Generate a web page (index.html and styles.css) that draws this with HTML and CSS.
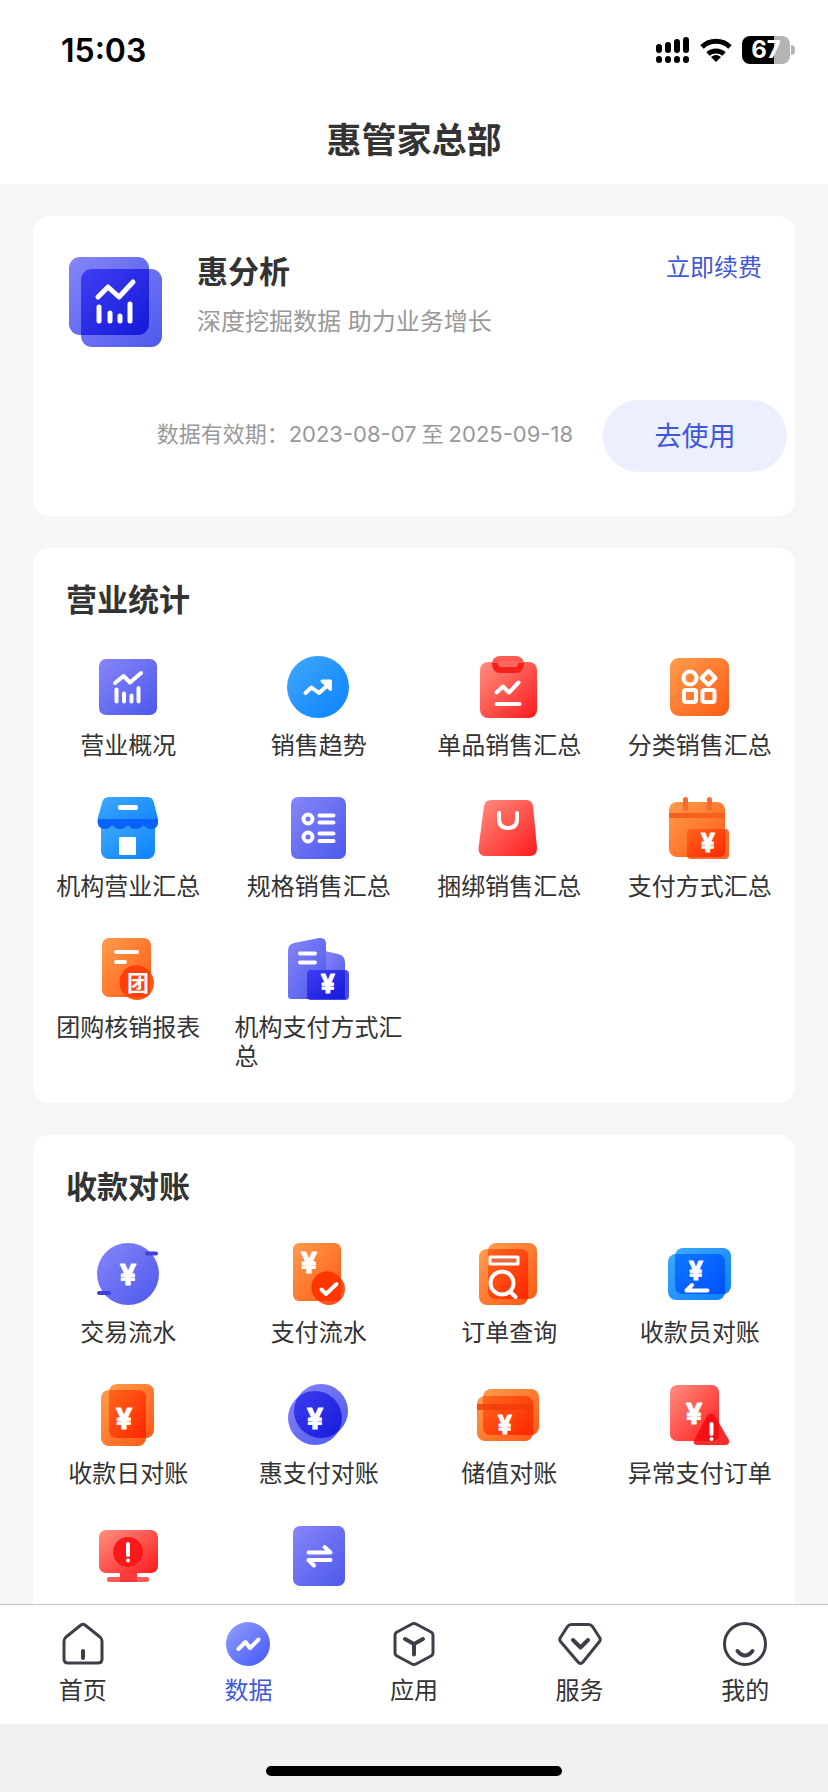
FILE: index.html
```html
<!DOCTYPE html>
<html lang="zh-CN">
<head>
  <meta charset="UTF-8">
  <meta name="viewport" content="width=device-width, initial-scale=1.0">
  <title>惠管家总部</title>
  <link rel="stylesheet" href="styles.css">
</head>
<body>
  <!-- shared gradients -->
  <svg class="defs" width="0" height="0" aria-hidden="true">
    <defs>
      <linearGradient id="purple" x1="0" y1="0" x2="1" y2="1"><stop offset="0" stop-color="#8785f8"/><stop offset="1" stop-color="#4c59ec"/></linearGradient>
      <linearGradient id="navy" x1="0" y1="0" x2="1" y2="1"><stop offset="0" stop-color="#3f3ff2"/><stop offset="1" stop-color="#1418d8"/></linearGradient>
      <linearGradient id="blue" x1="0" y1="0" x2="1" y2="1"><stop offset="0" stop-color="#3fa8f8"/><stop offset="1" stop-color="#0b82ff"/></linearGradient>
      <linearGradient id="deepblue" x1="0" y1="0" x2="1" y2="1"><stop offset="0" stop-color="#0f78ff"/><stop offset="1" stop-color="#0050ff"/></linearGradient>
      <linearGradient id="orange" x1="0" y1="0" x2="1" y2="1"><stop offset="0" stop-color="#ff9c4c"/><stop offset="1" stop-color="#ff5a14"/></linearGradient>
      <linearGradient id="fire" x1="0" y1="0" x2="1" y2="1"><stop offset="0" stop-color="#ff661c"/><stop offset="1" stop-color="#ff2600"/></linearGradient>
      <linearGradient id="red" x1="0" y1="0" x2="1" y2="1"><stop offset="0" stop-color="#ff8f80"/><stop offset="1" stop-color="#ff1a1c"/></linearGradient>
      <linearGradient id="tab" x1="0" y1="0" x2="1" y2="1"><stop offset="0" stop-color="#93a0fb"/><stop offset="1" stop-color="#4357fa"/></linearGradient>
      <clipPath id="coin"><circle cx="34" cy="28" r="27"/></clipPath>
    </defs>
  </svg>

  <div class="page">
    <header>
      <div class="status">
        <span class="time">15:03</span>
        <div class="status-icons">
          <svg width="34" height="28" viewBox="0 0 34 28" stroke="#000" stroke-width="6" stroke-linecap="round">
            <path d="M3 11v3M12 9v5M21 6v8M30 4v10"/>
            <path d="M3 23v1M12 23v1M21 23v1M30 23v1"/>
          </svg>
          <svg width="32" height="26" viewBox="0 0 32 26" fill="none" stroke="#000" stroke-width="5">
            <path d="M2 10a20 20 0 0 1 28 0"/>
            <path d="M8 17a12 12 0 0 1 16 0"/>
            <path d="M16 25l-5-5q5-4 10 0z" fill="#000" stroke="none"/>
          </svg>
          <div class="battery"><span>67</span></div>
        </div>
      </div>
      <h1>惠管家总部</h1>
    </header>

    <main>
      <section class="card promo">
        <div class="promo-top">
          <svg width="94" height="92" viewBox="0 0 94 92" fill="none">
            <rect x="0" y="1" width="80" height="78" rx="11" fill="url(#purple)"/>
            <rect x="12" y="13" width="81" height="78" rx="11" fill="url(#purple)"/>
            <path d="M23 13h57v55a11 11 0 0 1-11 11H12V24a11 11 0 0 1 11-11z" fill="url(#navy)"/>
            <g stroke="#fff" stroke-width="5" stroke-linecap="round" stroke-linejoin="round">
              <path d="M29 41l10-10 11 10 14-15"/>
              <path d="M30 51v14M41 57v8M51 60v5M61 48v17"/>
            </g>
          </svg>
          <div class="promo-text">
            <h2>惠分析</h2>
            <p>深度挖掘数据 助力业务增长</p>
          </div>
          <a class="renew" href="#">立即续费</a>
        </div>
        <div class="promo-bottom">
          <p>数据有效期：2023-08-07<span>至</span>2025-09-18</p>
          <button type="button">去使用</button>
        </div>
      </section>

      <section class="card">
        <h2>营业统计</h2>
        <div class="grid">
          <a class="item" href="#">
            <svg class="icon" viewBox="0 0 64 64">
              <rect x="3" y="4" width="58" height="56" rx="7" fill="url(#purple)"/>
              <path class="line" d="M19 28l8.500-7 6.500 6.500L45 18M20.500 34.500v12M28 38.500v8M35.500 40.500v6M42.500 33v13.500"/>
            </svg>
            <span>营业概况</span>
          </a>
          <a class="item" href="#">
            <svg class="icon" viewBox="0 0 64 64">
              <circle cx="31" cy="32" r="31" fill="url(#blue)"/>
              <path class="line" d="M18.500 38l6-5.500 7.500 5.500 10-9"/>
              <path d="M35 26h8.500v8.500z" fill="#fff" stroke="#fff" stroke-width="3" stroke-linejoin="round"/>
            </svg>
            <span>销售趋势</span>
          </a>
          <a class="item" href="#">
            <svg class="icon" viewBox="0 0 64 64">
              <rect x="3" y="7" width="57" height="56" rx="8" fill="url(#red)"/>
              <rect x="15" y="1" width="32" height="17" rx="8" fill="#fb5a52"/>
              <path d="M15 8q0 10 9 10h14q9 0 9-10h-6q0 4-5 4H26q-5 0-5-4z" fill="#f51f1c"/>
              <rect x="21" y="6" width="20" height="6" rx="3" fill="#ff665e"/>
              <path class="line" d="M19.500 37.500l6.500-6 6 6 9.500-10M19.500 49h23"/>
            </svg>
            <span>单品销售汇总</span>
          </a>
          <a class="item" href="#">
            <svg class="icon" viewBox="0 0 64 64">
              <rect x="2" y="3" width="59" height="58" rx="9" fill="url(#orange)"/>
              <circle class="line" cx="22" cy="23" r="6.500"/>
              <path class="line" d="M40.500 16l7 7-7 7-7-7z"/>
              <rect class="line" x="16" y="35" width="12" height="12" rx="2"/>
              <rect class="line" x="34.500" y="35" width="12" height="12" rx="2"/>
            </svg>
            <span>分类销售汇总</span>
          </a>

          <a class="item" href="#">
            <svg class="icon" viewBox="0 0 64 64">
              <path d="M5 28h54v27a8 8 0 0 1-8 8H13a8 8 0 0 1-8-8z" fill="url(#blue)"/>
              <path d="M13 1h38q6 0 7 6l4 16v5q-2 5-7 5-4 0-7.500-4-3.500 4-8 4t-7.500-4q-3.500 4-8 4t-8-4q-3 4-7 4-6 0-7.500-6v-4L6 7q1-6 7-6z" fill="url(#blue)"/>
              <path d="M2 23h60v5q-2 5-7 5-4 0-7.500-4-3.500 4-8 4t-7.500-4q-3.500 4-8 4t-8-4q-3 4-7 4-6 0-7-6z" fill="#0962fb"/>
              <rect x="22" y="9" width="20" height="5" rx="2" fill="#fff"/>
              <rect x="23" y="41" width="17" height="18" rx="1" fill="#fff"/>
            </svg>
            <span>机构营业汇总</span>
          </a>
          <a class="item" href="#">
            <svg class="icon" viewBox="0 0 64 64">
              <rect x="4" y="1" width="55" height="62" rx="7" fill="url(#purple)"/>
              <circle class="line" cx="21" cy="23" r="4.500"/>
              <circle class="line" cx="21" cy="41" r="4.500"/>
              <path class="line" d="M32.500 19.500h14M32.500 26.500h14M32.500 37.500h14M32.500 45h14"/>
            </svg>
            <span>规格销售汇总</span>
          </a>
          <a class="item" href="#">
            <svg class="icon" viewBox="0 0 64 64">
              <path d="M14 4h35q6 0 7 6l4 42q0 8-7 8H9q-8 0-7.500-8L7 10q1-6 7-6z" fill="url(#red)"/>
              <path class="line" d="M22 17v6q0 9 9 9t9-9v-6"/>
            </svg>
            <span>捆绑销售汇总</span>
          </a>
          <a class="item" href="#">
            <svg class="icon" viewBox="0 0 64 64">
              <rect x="1" y="6" width="56" height="55" rx="8" fill="url(#orange)"/>
              <rect x="1" y="17" width="56" height="5" fill="#f5601c"/>
              <path d="M17.500 3.500v9M41.500 3.500v9" stroke="#fa6a35" stroke-width="5" stroke-linecap="round"/>
              <rect x="19" y="33" width="42" height="30" rx="4" fill="#ff6a2c"/>
              <path d="M23 33h34v22q0 6-7 6H19V37q0-4 4-4z" fill="url(#fire)"/>
              <text class="yen small" x="40" y="56">¥</text>
            </svg>
            <span>支付方式汇总</span>
          </a>

          <a class="item" href="#">
            <svg class="icon" viewBox="0 0 64 64">
              <rect x="6" y="1" width="49" height="59" rx="7" fill="url(#orange)"/>
              <path class="line" d="M20 15h21M20 25h9"/>
              <circle cx="41" cy="46" r="17" fill="#ff5a1c"/>
              <path d="M54 35v18q0 7-7 7H32a17 17 0 1 1 22-25z" fill="#ff4108"/>
              <text class="tuan" x="42" y="54">团</text>
            </svg>
            <span>团购核销报表</span>
          </a>
          <a class="item" href="#">
            <svg class="icon" viewBox="0 0 64 64">
              <path d="M38 14l13 3q7 2 7 8v37H38z" fill="url(#purple)"/>
              <path d="M7 6l25-5q7-1 7 6v55H4q-3 0-3-3V14q0-7 6-8z" fill="url(#purple)"/>
              <rect x="20" y="33" width="42" height="30" rx="4" fill="#4a4cf0"/>
              <path d="M24 33h34v29H20V37q0-4 4-4z" fill="url(#navy)"/>
              <path class="line" d="M13 16.500h15M13 25.500h15"/>
              <text class="yen small" x="41" y="56">¥</text>
            </svg>
            <span>机构支付方式汇总</span>
          </a>
        </div>
      </section>

      <section class="card">
        <h2>收款对账</h2>
        <div class="grid">
          <a class="item" href="#">
            <svg class="icon" viewBox="0 0 64 64">
              <circle cx="32" cy="32" r="31" fill="url(#purple)"/>
              <path d="M51 11.500h9M3 51h10" stroke="#3f40dc" stroke-width="4" stroke-linecap="round"/>
              <text class="yen" x="32" y="43">¥</text>
            </svg>
            <span>交易流水</span>
          </a>
          <a class="item" href="#">
            <svg class="icon" viewBox="0 0 64 64">
              <rect x="6" y="1" width="48" height="58" rx="6" fill="url(#orange)"/>
              <circle cx="42" cy="47" r="16" fill="#ff5422"/>
              <path d="M54 37v16q0 6-6 6H32a16 16 0 1 1 22-22z" fill="#ff3600"/>
              <text class="yen" x="22" y="31">¥</text>
              <path class="line" d="M34.500 47.500l4.500 4.500 10.500-10"/>
            </svg>
            <span>支付流水</span>
          </a>
          <a class="item" href="#">
            <svg class="icon" viewBox="0 0 64 64">
              <rect x="11" y="1" width="49" height="56" rx="8" fill="url(#orange)"/>
              <rect x="2" y="7" width="49" height="56" rx="8" fill="url(#orange)"/>
              <path d="M11 7h32q8 0 8 8v42H19q-8 0-8-8z" fill="url(#fire)"/>
              <rect x="13" y="15" width="28" height="7" fill="#e2673c" stroke="#fff" stroke-width="3" stroke-linejoin="round"/>
              <circle class="line" cx="25" cy="41" r="11.500"/>
              <path class="line" d="M33.500 50l5 5"/>
            </svg>
            <span>订单查询</span>
          </a>
          <a class="item" href="#">
            <svg class="icon" viewBox="0 0 64 64">
              <rect x="7" y="6" width="56" height="46" rx="8" fill="url(#blue)"/>
              <rect x="0" y="12" width="57" height="46" rx="8" fill="url(#blue)"/>
              <path d="M7 12h42q8 0 8 8v32H15q-8 0-8-8z" fill="url(#deepblue)"/>
              <text class="yen small" x="28" y="38">¥</text>
              <path class="line" d="M24 43l-5.500 5.500h21"/>
            </svg>
            <span>收款员对账</span>
          </a>

          <a class="item" href="#">
            <svg class="icon" viewBox="0 0 64 64">
              <rect x="13" y="1" width="45" height="54" rx="8" fill="url(#orange)"/>
              <rect x="5" y="7" width="45" height="56" rx="8" fill="url(#orange)"/>
              <path d="M13 7h29q8 0 8 8v40H21q-8 0-8-8z" fill="url(#fire)"/>
              <text class="yen" x="28" y="46">¥</text>
            </svg>
            <span>收款日对账</span>
          </a>
          <a class="item" href="#">
            <svg class="icon" viewBox="0 0 64 64">
              <circle cx="34" cy="28" r="27" fill="url(#purple)"/>
              <circle cx="28" cy="35" r="27" fill="url(#purple)"/>
              <circle cx="28" cy="35" r="27" fill="url(#navy)" clip-path="url(#coin)"/>
              <text class="yen" x="28" y="46">¥</text>
            </svg>
            <span>惠支付对账</span>
          </a>
          <a class="item" href="#">
            <svg class="icon" viewBox="0 0 64 64">
              <rect x="6" y="6" width="56" height="46" rx="8" fill="url(#orange)"/>
              <rect x="0" y="13" width="56" height="45" rx="8" fill="url(#orange)"/>
              <path d="M6 13h42q8 0 8 8v31H14q-8 0-8-8z" fill="url(#fire)"/>
              <path d="M0 21h56v6H0z" fill="#f03c0a" opacity=".8"/>
              <text class="yen small" x="28" y="51">¥</text>
            </svg>
            <span>储值对账</span>
          </a>
          <a class="item" href="#">
            <svg class="icon" viewBox="0 0 64 64">
              <rect x="2" y="2" width="49" height="56" rx="7" fill="url(#red)"/>
              <path d="M39 33q4-5 8 0l14 24q1 5-4 5H30q-6 0-4-5z" fill="#fa2c30"/>
              <path d="M39 33q4-5 8 0l4 7v11q0 7-7 7H26z" fill="#f50f14"/>
              <text class="yen" x="26" y="41">¥</text>
              <path class="line" d="M43.500 41v10M43.500 56v0"/>
            </svg>
            <span>异常支付订单</span>
          </a>

          <a class="item" href="#">
            <svg class="icon" viewBox="0 0 64 64">
              <rect x="11" y="53" width="42" height="5" rx="2" fill="#fc5b56"/>
              <rect x="24" y="49" width="17" height="9" fill="#fb3a3a"/>
              <rect x="3" y="6" width="59" height="43" rx="7" fill="url(#red)"/>
              <circle cx="32" cy="28" r="15" fill="#f81a1a"/>
              <path class="line" d="M32 20v11M32 36.500v0"/>
            </svg>
          </a>
          <a class="item" href="#">
            <svg class="icon" viewBox="0 0 64 64">
              <rect x="6" y="2" width="52" height="60" rx="7" fill="url(#purple)"/>
              <path class="line" d="M21.500 28.500h22l-6-5.500M43.500 36h-22l5.500 5.500"/>
            </svg>
          </a>
        </div>
      </section>
    </main>

    <nav>
      <a href="#">
        <svg class="tab-icon" viewBox="0 0 44 44">
          <path d="M24 3l15 12q2 2 2 4v18q0 4-4 4H7q-4 0-4-4V19q0-2 2-4L20 3q2-1.500 4 0z"/>
          <path d="M22 29v7" stroke-width="4"/>
        </svg>
        <span>首页</span>
      </a>
      <a class="active" href="#">
        <svg class="tab-icon" viewBox="0 0 44 44">
          <circle cx="22" cy="22" r="22" fill="url(#tab)" stroke="none"/>
          <path d="M12.500 27l7-7 4.500 6 8.500-8.500" stroke="#fff" stroke-width="4"/>
        </svg>
        <span>数据</span>
      </a>
      <a href="#">
        <svg class="tab-icon" viewBox="0 0 44 44">
          <path d="M24 2l15 8q2 1 2 3.500v17q0 2.500-2 3.500l-15 8q-2 1-4 0L5 34q-2-1-2-3.500v-17Q3 11 5 10l15-8q2-1 4 0z"/>
          <path d="M13 17l9 5 9-5M22 22v10.500" stroke-width="4"/>
        </svg>
        <span>应用</span>
      </a>
      <a href="#">
        <svg class="tab-icon" viewBox="0 0 44 44">
          <path d="M13.500 2.500h17q2.500 0 4 2l7 11q1.500 2 0 4L25 40q-2.500 3-5 0L2.500 19.500q-1.500-2 0-4l7-11q1.500-2 4-2z"/>
          <path d="M15 18l7.500 7.500L30 18" stroke-width="4"/>
        </svg>
        <span>服务</span>
      </a>
      <a href="#">
        <svg class="tab-icon" viewBox="0 0 44 44">
          <circle cx="22" cy="22" r="20.500"/>
          <path d="M14.500 29q7.500 9 15 0" stroke-width="4"/>
        </svg>
        <span>我的</span>
      </a>
    </nav>
    <div class="home-bar"><i></i></div>
  </div>
</body>
</html>
```
FILE: styles.css
```css
* {
  margin: 0;
  padding: 0;
  box-sizing: border-box;
}
body {
  font-family: Inter, "Noto Sans CJK SC", sans-serif;
  color: #333;
  background: #f6f6f9;
}
a {
  color: inherit;
  text-decoration: none;
}
svg {
  display: block;
  flex: none;
}
.defs {
  position: absolute;
}
.page {
  display: flex;
  flex-direction: column;
  height: 100vh;
}

/* header */
header {
  flex: none;
  background: #fff;
}
.status {
  display: flex;
  justify-content: space-between;
  align-items: center;
  height: 100px;
  padding: 0 33px 0 61px;
}
.time {
  font-size: 32px;
  font-weight: 600;
  color: #000;
}
.status-icons {
  display: flex;
  align-items: center;
  gap: 10px;
}
.battery {
  display: flex;
  align-items: center;
}
.battery span {
  width: 48px;
  height: 28px;
  border-radius: 8px;
  background: linear-gradient(90deg, #000 67%, #b4b4b4 67%);
  color: #fff;
  font-size: 24px;
  font-weight: 700;
  line-height: 28px;
  text-align: center;
}
.battery::after {
  content: "";
  width: 4px;
  height: 10px;
  margin-left: 1px;
  border-radius: 0 4px 4px 0;
  background: #b4b4b4;
}
h1 {
  height: 84px;
  line-height: 80px;
  font-size: 35px;
  font-weight: 700;
  text-align: center;
}

/* cards */
main {
  flex: 1;
  min-height: 0;
  display: flex;
  flex-direction: column;
  gap: 32px;
  padding: 32px 33px 0;
  overflow-y: auto;
  scrollbar-width: none;
}
.card {
  flex: none;
  padding: 30px 0 32px;
  border-radius: 16px;
  background: #fff;
}
h2 {
  font-size: 31px;
  font-weight: 700;
  line-height: 44px;
}
.card > h2 {
  margin-bottom: 33px;
  padding-left: 33px;
}
.promo {
  padding: 40px 8px 44px 36px;
}
.promo-top {
  display: flex;
}
.promo-text {
  flex: 1;
  margin-left: 34px;
}
.promo-text h2 {
  margin: -6px 0 10px;
}
.promo-text p {
  font-size: 24px;
  line-height: 36px;
  color: #999;
}
.renew {
  margin-right: 25px;
  font-size: 24px;
  line-height: 24px;
  color: #4158d8;
}
.promo-bottom {
  display: flex;
  justify-content: flex-end;
  align-items: center;
  gap: 30px;
  margin-top: 52px;
}
.promo-bottom p {
  padding-bottom: 4px;
  font-size: 22px;
  line-height: 32px;
  color: #999;
}
.promo-bottom p span {
  margin: 0 5px;
}
button {
  width: 184px;
  height: 72px;
  padding-bottom: 3px;
  border: none;
  border-radius: 36px;
  background: #ebeffe;
  color: #4158d8;
  font-family: inherit;
  font-size: 27px;
}

/* icon grid */
.grid {
  display: grid;
  grid-template-columns: repeat(4, 1fr);
  row-gap: 36px;
}
.item {
  display: flex;
  flex-direction: column;
  align-items: center;
  gap: 12px;
  padding: 0 11px;
  font-size: 24px;
  line-height: 29px;
}
.icon {
  width: 64px;
  height: 64px;
}
.line {
  fill: none;
  stroke: #fff;
  stroke-width: 4;
  stroke-linecap: round;
  stroke-linejoin: round;
}
.yen {
  fill: #fff;
  stroke: #fff;
  stroke-width: 1;
  stroke-linejoin: round;
  font-size: 29px;
  font-weight: 700;
  text-anchor: middle;
}
.yen.small {
  font-size: 25px;
}
.tuan {
  fill: #fff;
  font-size: 22px;
  font-weight: 700;
  text-anchor: middle;
}

/* bottom tabs */
nav {
  flex: none;
  display: flex;
  height: 120px;
  padding-top: 17px;
  border-top: 1px solid #c8c8c8;
  background: #fff;
}
nav a {
  flex: 1;
  display: flex;
  flex-direction: column;
  align-items: center;
  gap: 10px;
  font-size: 24px;
  line-height: 29px;
}
nav .active {
  color: #4158d8;
}
.tab-icon {
  width: 44px;
  height: 44px;
  fill: none;
  stroke: #3e3e48;
  stroke-width: 3;
  stroke-linecap: round;
  stroke-linejoin: round;
}
.home-bar {
  flex: none;
  display: flex;
  justify-content: center;
  align-items: flex-end;
  height: 68px;
  padding-bottom: 16px;
  background: #f1f1f1;
}
.home-bar i {
  width: 296px;
  height: 10px;
  border-radius: 5px;
  background: #000;
}
```
